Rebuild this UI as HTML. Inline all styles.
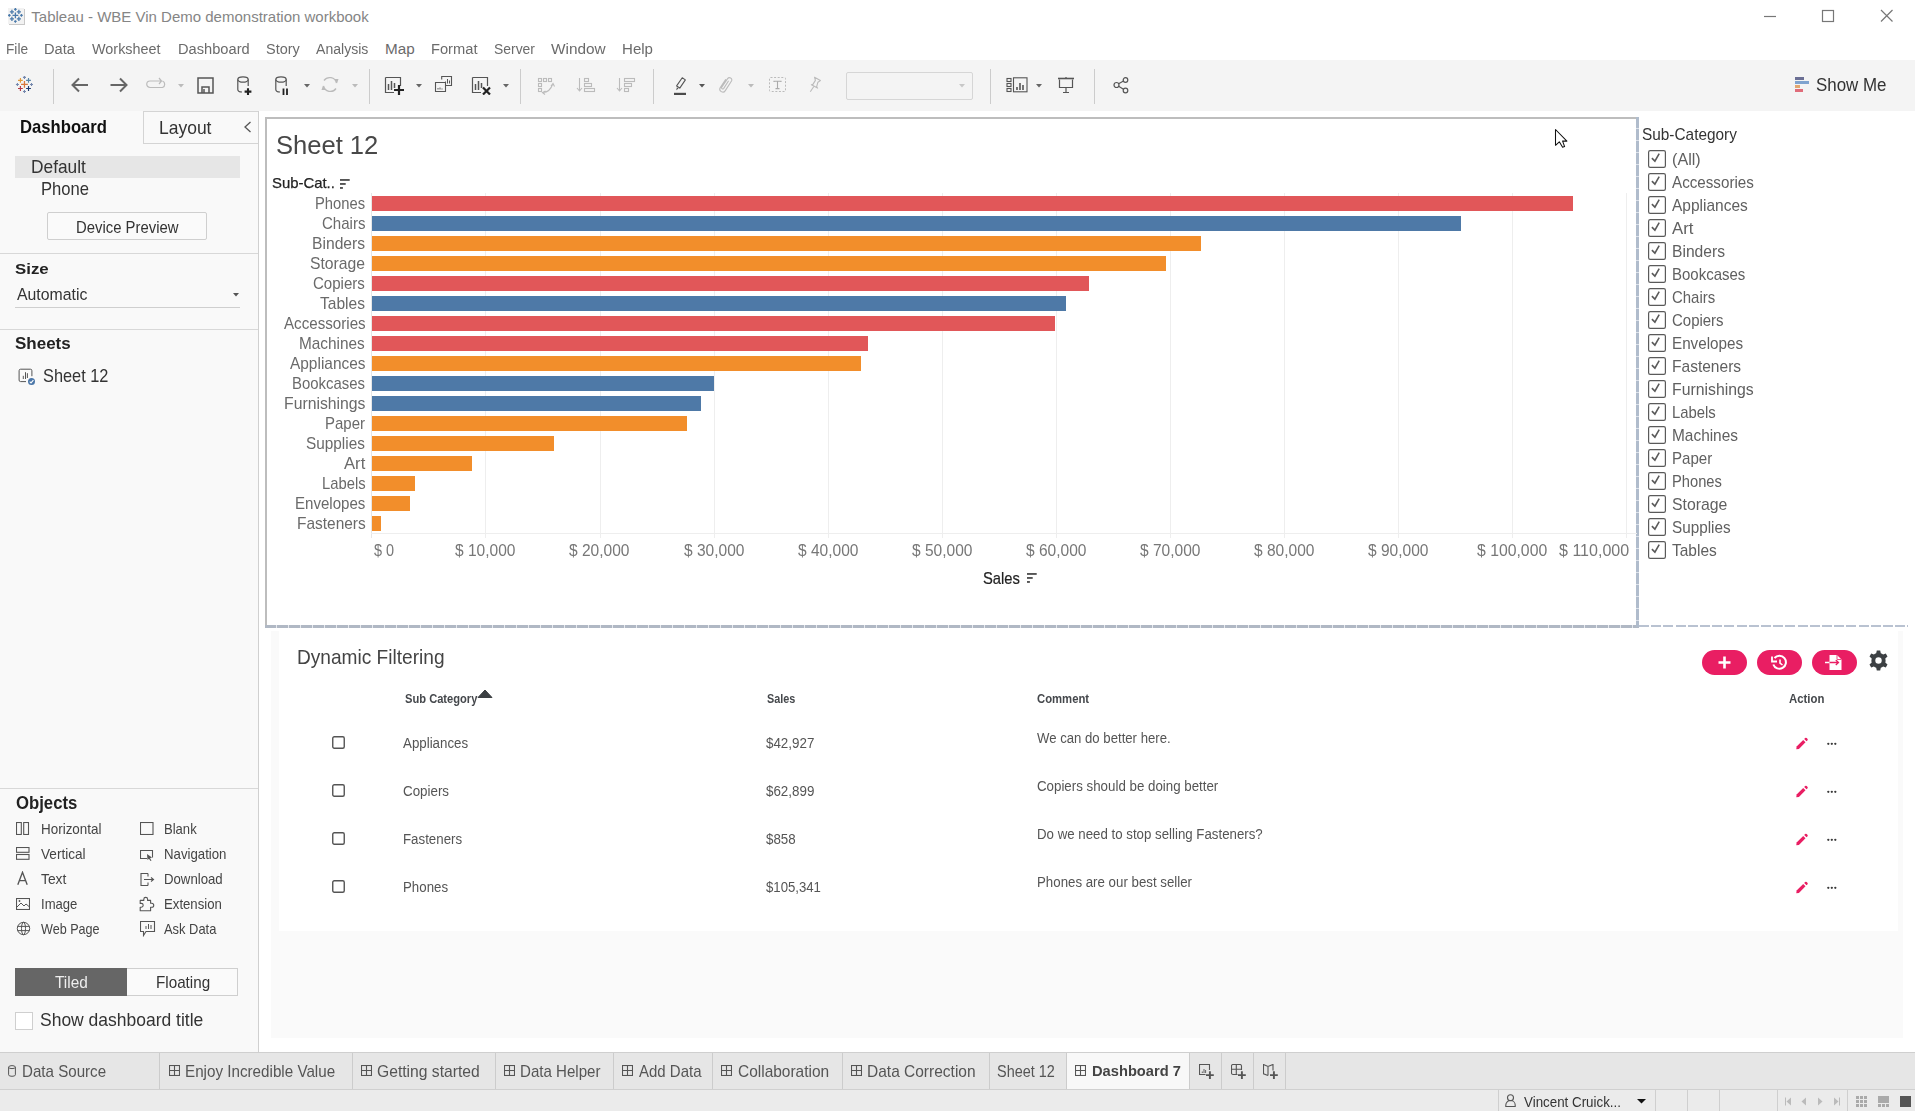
<!DOCTYPE html><html><head><meta charset="utf-8"><style>
html,body{margin:0;padding:0;width:1915px;height:1111px;overflow:hidden;background:#fff;font-family:"Liberation Sans",sans-serif;}
.t{position:absolute;white-space:nowrap;transform-origin:0 0;}
.r{position:absolute;display:block;}
</style></head><body>
<div class="r" style="left:0px;top:0px;width:1915px;height:60px;background:#ffffff;"></div>
<div class="r" style="left:0px;top:60px;width:1915px;height:51px;background:#f4f4f4;"></div>
<div class="r" style="left:0px;top:111px;width:258px;height:941px;background:#f9f9f9;"></div>
<div class="r" style="left:258px;top:111px;width:1px;height:941px;background:#d0d0d0;"></div>
<div class="r" style="left:259px;top:111px;width:1656px;height:941px;background:#ffffff;"></div>
<div class="t" style="left:31.30px;top:9.30px;font-size:15.00px;line-height:15.00px;color:#858585;">Tableau - WBE Vin Demo demonstration workbook</div>
<svg class="r" style="left:1760px;top:5px;" width="140" height="24" viewBox="0 0 140 24"><path d="M4 11.5H16" stroke="#777" stroke-width="1.2"/><rect x="62.5" y="5.5" width="11" height="11" fill="none" stroke="#777" stroke-width="1.2"/><path d="M121 5L132.5 16.5M132.5 5L121 16.5" stroke="#777" stroke-width="1.2"/></svg>
<div class="t" style="left:5.50px;top:40.88px;font-size:15.26px;line-height:15.26px;color:#6b6b6b;transform:scaleX(0.8989);">File</div>
<div class="t" style="left:44.10px;top:40.88px;font-size:15.26px;line-height:15.26px;color:#6b6b6b;transform:scaleX(0.9613);">Data</div>
<div class="t" style="left:92.00px;top:40.88px;font-size:15.26px;line-height:15.26px;color:#6b6b6b;transform:scaleX(0.9441);">Worksheet</div>
<div class="t" style="left:177.50px;top:40.88px;font-size:15.26px;line-height:15.26px;color:#6b6b6b;transform:scaleX(0.9604);">Dashboard</div>
<div class="t" style="left:266.00px;top:40.88px;font-size:15.26px;line-height:15.26px;color:#6b6b6b;transform:scaleX(0.9489);">Story</div>
<div class="t" style="left:316.40px;top:40.88px;font-size:15.26px;line-height:15.26px;color:#6b6b6b;transform:scaleX(0.9220);">Analysis</div>
<div class="t" style="left:385.00px;top:40.88px;font-size:15.26px;line-height:15.26px;color:#6b6b6b;">Map</div>
<div class="t" style="left:431.20px;top:40.88px;font-size:15.26px;line-height:15.26px;color:#6b6b6b;transform:scaleX(0.9621);">Format</div>
<div class="t" style="left:493.90px;top:40.88px;font-size:15.26px;line-height:15.26px;color:#6b6b6b;transform:scaleX(0.9122);">Server</div>
<div class="t" style="left:550.80px;top:40.88px;font-size:15.26px;line-height:15.26px;color:#6b6b6b;transform:scaleX(1.0089);">Window</div>
<div class="t" style="left:622.10px;top:40.88px;font-size:15.26px;line-height:15.26px;color:#6b6b6b;transform:scaleX(0.9875);">Help</div>
<div class="r" style="left:53px;top:69px;width:1px;height:35px;background:#cccccc;"></div>
<div class="r" style="left:369px;top:69px;width:1px;height:35px;background:#cccccc;"></div>
<div class="r" style="left:520px;top:69px;width:1px;height:35px;background:#cccccc;"></div>
<div class="r" style="left:653px;top:69px;width:1px;height:35px;background:#cccccc;"></div>
<div class="r" style="left:990px;top:69px;width:1px;height:35px;background:#cccccc;"></div>
<div class="r" style="left:1094px;top:69px;width:1px;height:35px;background:#cccccc;"></div>
<svg class="r" style="left:0px;top:60px;" width="50" height="50" viewBox="0 0 50 50"><path d="M21.06 24.46H27.86M24.46 21.06V27.86" stroke="#d9773a" stroke-width="1.25"/><path d="M18.01 20.41H22.81M20.41 18.01V22.81" stroke="#e29a3a" stroke-width="1.15"/><path d="M26.11 20.41H30.91M28.51 18.01V22.81" stroke="#5a86a6" stroke-width="1.15"/><path d="M18.01 28.51H22.81M20.41 26.11V30.91" stroke="#b53a45" stroke-width="1.15"/><path d="M26.11 28.51H30.91M28.51 26.11V30.91" stroke="#1f3b70" stroke-width="1.15"/><path d="M22.96 17.41H25.96M24.46 15.91V18.91" stroke="#7487ad" stroke-width="1.1"/><path d="M15.91 24.46H18.91M17.41 22.96V25.96" stroke="#7487ad" stroke-width="1.1"/><path d="M30.01 24.46H33.01M31.51 22.96V25.96" stroke="#7487ad" stroke-width="1.1"/><path d="M22.96 31.51H25.96M24.46 30.01V33.01" stroke="#7487ad" stroke-width="1.1"/></svg>
<div class="r" style="left:9px;top:9px;width:16px;height:16px;background:#c8c8c8;filter:blur(0.6px);"></div>
<div class="r" style="left:8px;top:8px;width:16px;height:16px;background:#f2f2f2;"></div>
<svg class="r" style="left:0px;top:0px;" width="32" height="32" viewBox="0 0 32 32"><path d="M12.48 15.40H18.32M15.40 12.48V18.32" stroke="#4a7aab" stroke-width="1.29"/><path d="M9.85 11.92H13.98M11.92 9.85V13.98" stroke="#4a7aab" stroke-width="1.29"/><path d="M16.82 11.92H20.95M18.88 9.85V13.98" stroke="#4a7aab" stroke-width="1.29"/><path d="M9.85 18.88H13.98M11.92 16.82V20.95" stroke="#4a7aab" stroke-width="1.29"/><path d="M16.82 18.88H20.95M18.88 16.82V20.95" stroke="#4a7aab" stroke-width="1.29"/><path d="M14.11 9.34H16.69M15.40 8.05V10.63" stroke="#4a7aab" stroke-width="1.204"/><path d="M8.05 15.40H10.63M9.34 14.11V16.69" stroke="#4a7aab" stroke-width="1.204"/><path d="M20.17 15.40H22.75M21.46 14.11V16.69" stroke="#4a7aab" stroke-width="1.204"/><path d="M14.11 21.46H16.69M15.40 20.17V22.75" stroke="#4a7aab" stroke-width="1.204"/></svg>
<svg class="r" style="left:71px;top:77px;" width="18" height="16" viewBox="0 0 18 16"><path d="M1.5 8H17M8 1.5L1.5 8L8 14.5" fill="none" stroke="#666" stroke-width="2"/></svg>
<svg class="r" style="left:110px;top:77px;" width="18" height="16" viewBox="0 0 18 16"><path d="M0.5 8H16M10 1.5L16.5 8L10 14.5" fill="none" stroke="#666" stroke-width="2"/></svg>
<svg class="r" style="left:146px;top:77px;" width="20" height="12" viewBox="0 0 20 12"><path d="M6 4H15M16.5 4A3.5 3.5 0 0 1 16.5 10.5H4A3.2 3.2 0 0 1 4 4H6M13 1L15.5 4L13 7" fill="none" stroke="#bbb" stroke-width="1.2"/></svg>
<svg class="r" style="left:178px;top:83.8px;" width="6" height="4" viewBox="0 0 6 4"><path d="M0 0H6L3 3.5Z" fill="#bbb"/></svg>
<svg class="r" style="left:197px;top:77px;" width="17" height="17" viewBox="0 0 17 17"><path d="M1 1H16V16H1Z M5 16V10H12V16M7 12V16" fill="none" stroke="#555" stroke-width="1.5"/></svg>
<svg class="r" style="left:237px;top:76px;" width="16" height="19" viewBox="0 0 16 19"><ellipse cx="6" cy="3.5" rx="5.2" ry="2.7" fill="none" stroke="#555" stroke-width="1.2"/><path d="M0.8 3.5V13.5Q0.8 16 5 16" fill="none" stroke="#555" stroke-width="1.2"/><path d="M11.2 3.5V10" fill="none" stroke="#555" stroke-width="1.2"/><path d="M11 12.3V19M7.6 15.6H14.4" stroke="#222" stroke-width="2.1"/></svg>
<svg class="r" style="left:275px;top:76px;" width="16" height="19" viewBox="0 0 16 19"><ellipse cx="6" cy="3.5" rx="5.2" ry="2.7" fill="none" stroke="#555" stroke-width="1.2"/><path d="M0.8 3.5V13.5Q0.8 16 5 16" fill="none" stroke="#555" stroke-width="1.2"/><path d="M11.2 3.5V10" fill="none" stroke="#555" stroke-width="1.2"/><path d="M8.5 12.5V19M12 12.5V19" stroke="#222" stroke-width="1.8"/></svg>
<svg class="r" style="left:304px;top:83.8px;" width="6" height="4" viewBox="0 0 6 4"><path d="M0 0H6L3 3.5Z" fill="#666"/></svg>
<svg class="r" style="left:321px;top:76px;" width="18" height="17" viewBox="0 0 18 17"><path d="M15.5 7A7 7 0 0 0 3 4.5M2.5 10A7 7 0 0 0 15 12.5" fill="none" stroke="#bbb" stroke-width="1.3"/><path d="M13.5 3L16 7.5L17.5 3Z M4.5 14L2 9.5L0.5 14Z" fill="#bbb"/></svg>
<svg class="r" style="left:352px;top:83.8px;" width="6" height="4" viewBox="0 0 6 4"><path d="M0 0H6L3 3.5Z" fill="#bbb"/></svg>
<svg class="r" style="left:384px;top:76px;" width="21" height="19" viewBox="0 0 21 19"><path d="M1.5 1.5H16.5V10M10 16.5H1.5V1.5" fill="none" stroke="#555" stroke-width="1.2"/><path d="M4.5 8V14M7.5 5V14M10.5 7V12" stroke="#555" stroke-width="1.5"/><path d="M15 9V19M10 14H20" stroke="#222" stroke-width="2.2"/></svg>
<svg class="r" style="left:416px;top:83.8px;" width="6" height="4" viewBox="0 0 6 4"><path d="M0 0H6L3 3.5Z" fill="#666"/></svg>
<svg class="r" style="left:434px;top:75px;" width="19" height="18" viewBox="0 0 19 18"><path d="M7.7 4.5V1.5H17.5V10.5H12" fill="none" stroke="#555" stroke-width="1.1"/><path d="M11.5 8.5V6.5M13.5 8.5V4M15.5 8.5V5.5" stroke="#555" stroke-width="1"/><path d="M1.5 7.5H11.5V16.5H1.5Z" fill="#f4f4f4" stroke="#555" stroke-width="1.1"/><path d="M4 14.5V13M6 14.5V12.5M8 14.5V13.5" stroke="#555" stroke-width="1"/></svg>
<svg class="r" style="left:471px;top:76px;" width="21" height="19" viewBox="0 0 21 19"><path d="M1.5 1.5H16.5V10M10 16.5H1.5V1.5" fill="none" stroke="#555" stroke-width="1.2"/><path d="M4.5 8V14M7.5 5V14M10.5 7V12" stroke="#555" stroke-width="1.5"/><path d="M12 11.5L19 18.5M19 11.5L12 18.5" stroke="#222" stroke-width="2.2"/></svg>
<svg class="r" style="left:503px;top:83.8px;" width="6" height="4" viewBox="0 0 6 4"><path d="M0 0H6L3 3.5Z" fill="#666"/></svg>
<svg class="r" style="left:537px;top:77px;" width="19" height="18" viewBox="0 0 19 18"><g fill="none" stroke="#bbb" stroke-width="1.1"><rect x="1.5" y="1.5" width="3" height="3"/><rect x="6.5" y="1.5" width="3" height="3"/><rect x="11.5" y="1.5" width="3" height="3"/><rect x="1.5" y="6.5" width="3" height="3"/><rect x="1.5" y="11.5" width="3" height="3"/><path d="M6 15.5Q13 15 15.5 7.5M14 9L16 6.5L17.5 9.5M8 17.5L5.5 15.5L8.5 14"/></g></svg>
<svg class="r" style="left:576px;top:77px;" width="20" height="16" viewBox="0 0 20 16"><g fill="none" stroke="#bbb" stroke-width="1.1"><path d="M3.5 1V13M1 11L3.5 14L6 11"/><rect x="8.5" y="1.5" width="4" height="3"/><rect x="8.5" y="6.5" width="7" height="3"/><rect x="8.5" y="11.5" width="10" height="3"/></g></svg>
<svg class="r" style="left:616px;top:77px;" width="20" height="16" viewBox="0 0 20 16"><g fill="none" stroke="#bbb" stroke-width="1.1"><path d="M3.5 1V13M1 11L3.5 14L6 11"/><rect x="8.5" y="1.5" width="10" height="3"/><rect x="8.5" y="6.5" width="7" height="3"/><rect x="8.5" y="11.5" width="4" height="3"/></g></svg>
<svg class="r" style="left:673px;top:76px;" width="15" height="20" viewBox="0 0 15 20"><path d="M3.63 9.93L9.23 1.73L12.37 3.87L6.77 12.07Z" fill="none" stroke="#555" stroke-width="1.1" stroke-linejoin="round"/><path d="M3.9 11.2L5.6 12.4L3.2 14.3Z" fill="#555"/><rect x="1" y="16.8" width="12" height="2.2" fill="#4a4a4a"/></svg>
<svg class="r" style="left:699px;top:83.8px;" width="6" height="4" viewBox="0 0 6 4"><path d="M0 0H6L3 3.5Z" fill="#555"/></svg>
<svg class="r" style="left:719px;top:76px;" width="14" height="17" viewBox="0 0 14 17"><path d="M9.3 5.2L4.6 12.6A1.2 1.2 0 0 1 2.6 11.4L8.6 2.6A2.3 2.3 0 0 1 12.5 5L6.3 14.6A2.9 2.9 0 0 1 1.3 11.6L6.6 3.6" fill="none" stroke="#bbb" stroke-width="1.1" stroke-linecap="round"/></svg>
<svg class="r" style="left:748px;top:83.8px;" width="6" height="4" viewBox="0 0 6 4"><path d="M0 0H6L3 3.5Z" fill="#bbb"/></svg>
<svg class="r" style="left:769px;top:77px;" width="18" height="16" viewBox="0 0 18 16"><rect x="0.5" y="0.5" width="16" height="14" rx="1" fill="none" stroke="#bbb" stroke-width="1" stroke-dasharray="2 1.6"/><path d="M5 5.1V4.3H12V5.1M8.5 4.3V11.5M6.5 11.6H10.5" fill="none" stroke="#aaa" stroke-width="1.1"/></svg>
<svg class="r" style="left:807px;top:76px;" width="15" height="17" viewBox="0 0 15 17"><path d="M7.5 1.2L13.4 4.6L10.9 6.2L9.6 10.8L10.6 12.1L4.4 8.7L5.9 8.4L8.4 4.4Z" fill="none" stroke="#bbb" stroke-width="1.1" stroke-linejoin="round"/><path d="M6.8 10.5L3.3 15.8" stroke="#bbb" stroke-width="1.1"/></svg>
<div class="r" style="left:846px;top:72px;width:127px;height:28px;background:transparent;border:1px solid #d6d6d6;box-sizing:border-box;border-radius:2px;"></div>
<svg class="r" style="left:958.5px;top:84px;" width="6" height="4" viewBox="0 0 6 4"><path d="M0 0H6L3 3.5Z" fill="#c8c8c8"/></svg>
<svg class="r" style="left:1006px;top:77px;" width="22" height="16" viewBox="0 0 22 16"><g fill="none" stroke="#555" stroke-width="1.1"><rect x="1" y="1.5" width="4" height="3"/><rect x="1" y="6.5" width="4" height="3"/><rect x="1" y="11.5" width="4" height="3"/><rect x="7.5" y="0.8" width="13.5" height="14"/></g><path d="M11 13V10M14 13V6M17 13V8" stroke="#555" stroke-width="1.6"/></svg>
<svg class="r" style="left:1036px;top:83.8px;" width="6" height="4" viewBox="0 0 6 4"><path d="M0 0H6L3 3.5Z" fill="#666"/></svg>
<svg class="r" style="left:1057px;top:77px;" width="18" height="17" viewBox="0 0 18 17"><path d="M1 1.5H17" stroke="#555" stroke-width="1.6"/><path d="M2.5 2.5V10.5H15.5V2.5M9 10.5V15.5M6 15.5H12M9 0V1" fill="none" stroke="#555" stroke-width="1.2"/></svg>
<svg class="r" style="left:1113px;top:77px;" width="16" height="17" viewBox="0 0 16 17"><g fill="none" stroke="#555" stroke-width="1.2"><circle cx="3.5" cy="8" r="2.5"/><circle cx="12.5" cy="3" r="2.3"/><circle cx="12.5" cy="13.5" r="2.3"/><path d="M5.6 6.8L10.5 4M5.6 9.2L10.5 12.2"/></g></svg>
<svg class="r" style="left:1795px;top:76px;" width="15" height="16" viewBox="0 0 15 16"><rect x="0" y="1" width="9" height="3" fill="#6b6f94"/><rect x="0" y="5" width="14" height="3" fill="#7fa3cf"/><rect x="0" y="9" width="5" height="3" fill="#e2a76f"/><rect x="0" y="13" width="8" height="3" fill="#e06c7a"/></svg>
<div class="t" style="left:1816.40px;top:76.01px;font-size:18.90px;line-height:18.90px;color:#333;transform:scaleX(0.8952);">Show Me</div>
<div class="t" style="left:19.70px;top:118.79px;font-size:17.73px;line-height:17.73px;color:#111;font-weight:bold;transform:scaleX(0.9404);">Dashboard</div>
<div class="r" style="left:143px;top:111px;width:115px;height:1px;background:#d4d4d4;"></div>
<div class="r" style="left:143px;top:111px;width:1px;height:33px;background:#d4d4d4;"></div>
<div class="r" style="left:143px;top:143px;width:115px;height:1px;background:#d4d4d4;"></div>
<div class="t" style="left:159.30px;top:118.90px;font-size:18.31px;line-height:18.31px;color:#333;transform:scaleX(0.9549);">Layout</div>
<svg class="r" style="left:243px;top:121px;" width="9" height="12" viewBox="0 0 9 12"><path d="M7.5 1L2 6L7.5 11" fill="none" stroke="#555" stroke-width="1.3"/></svg>
<div class="r" style="left:15px;top:156px;width:225px;height:22px;background:#e6e6e6;"></div>
<div class="t" style="left:31.10px;top:157.50px;font-size:18.31px;line-height:18.31px;color:#333;transform:scaleX(0.9462);">Default</div>
<div class="t" style="left:41.20px;top:180.89px;font-size:17.73px;line-height:17.73px;color:#333;transform:scaleX(0.9379);">Phone</div>
<div class="r" style="left:47px;top:212px;width:160px;height:28px;background:#fafafa;border:1px solid #cfcfcf;box-sizing:border-box;border-radius:2px;"></div>
<div class="t" style="left:75.70px;top:218.94px;font-size:16.13px;line-height:16.13px;color:#333;transform:scaleX(0.9233);">Device Preview</div>
<div class="r" style="left:0px;top:253px;width:258px;height:1px;background:#d8d8d8;"></div>
<div class="t" style="left:15.40px;top:261.26px;font-size:15.41px;line-height:15.41px;color:#222;font-weight:bold;transform:scaleX(1.0931);">Size</div>
<div class="t" style="left:16.50px;top:286.34px;font-size:16.13px;line-height:16.13px;color:#333;transform:scaleX(0.9828);">Automatic</div>
<svg class="r" style="left:233px;top:293px;" width="6" height="4" viewBox="0 0 6 4"><path d="M0 0H6L3 3.5Z" fill="#555"/></svg>
<div class="r" style="left:15px;top:307px;width:225px;height:1px;background:#cfcfcf;"></div>
<div class="r" style="left:0px;top:329px;width:258px;height:1px;background:#d8d8d8;"></div>
<div class="t" style="left:15.40px;top:336.17px;font-size:16.57px;line-height:16.57px;color:#222;font-weight:bold;transform:scaleX(1.0252);">Sheets</div>
<svg class="r" style="left:18px;top:368px;" width="18" height="18" viewBox="0 0 18 18"><path d="M8 13.6H2.6A1.5 1.5 0 0 1 1.1 12.1V2.7A1.5 1.5 0 0 1 2.6 1.2H12.4A1.5 1.5 0 0 1 13.9 2.7V8.2" fill="none" stroke="#555" stroke-width="1"/><path d="M5.3 11V7.8M7.5 11V4.2M9.4 10V5.2" stroke="#555" stroke-width="1"/><circle cx="13.5" cy="13.5" r="3.5" fill="#4a76a8"/><path d="M11.7 13.7L13 14.9L15.4 12.1" fill="none" stroke="#fff" stroke-width="1.1"/></svg>
<div class="t" style="left:43.30px;top:367.79px;font-size:17.73px;line-height:17.73px;color:#333;transform:scaleX(0.9228);">Sheet 12</div>
<div class="r" style="left:0px;top:788px;width:258px;height:1px;background:#d8d8d8;"></div>
<div class="t" style="left:15.60px;top:795.44px;font-size:17.44px;line-height:17.44px;color:#222;font-weight:bold;transform:scaleX(0.9582);">Objects</div>
<div class="t" style="left:40.60px;top:821.87px;font-size:14.10px;line-height:14.10px;color:#444;transform:scaleX(0.9532);">Horizontal</div>
<div class="t" style="left:164.40px;top:821.87px;font-size:14.10px;line-height:14.10px;color:#444;transform:scaleX(0.9266);">Blank</div>
<div class="t" style="left:40.60px;top:846.87px;font-size:14.10px;line-height:14.10px;color:#444;transform:scaleX(0.9647);">Vertical</div>
<div class="t" style="left:164.40px;top:846.87px;font-size:14.10px;line-height:14.10px;color:#444;transform:scaleX(0.9382);">Navigation</div>
<div class="t" style="left:40.60px;top:871.87px;font-size:14.10px;line-height:14.10px;color:#444;transform:scaleX(0.9823);">Text</div>
<div class="t" style="left:164.40px;top:871.87px;font-size:14.10px;line-height:14.10px;color:#444;transform:scaleX(0.9362);">Download</div>
<div class="t" style="left:40.60px;top:896.87px;font-size:14.10px;line-height:14.10px;color:#444;transform:scaleX(0.9290);">Image</div>
<div class="t" style="left:164.40px;top:896.87px;font-size:14.10px;line-height:14.10px;color:#444;transform:scaleX(0.9350);">Extension</div>
<div class="t" style="left:40.60px;top:921.87px;font-size:14.10px;line-height:14.10px;color:#444;transform:scaleX(0.8937);">Web Page</div>
<div class="t" style="left:164.40px;top:921.87px;font-size:14.10px;line-height:14.10px;color:#444;transform:scaleX(0.9159);">Ask Data</div>
<svg class="r" style="left:16px;top:822px;" width="14" height="13" viewBox="0 0 14 13"><g fill="none" stroke="#555" stroke-width="1.1"><rect x="0.5" y="0.5" width="4.8" height="12"/><rect x="7.7" y="0.5" width="4.8" height="12"/></g></svg>
<svg class="r" style="left:140px;top:822px;" width="14" height="13" viewBox="0 0 14 13"><rect x="0.5" y="0.5" width="12.5" height="12" fill="none" stroke="#555" stroke-width="1.1"/></svg>
<svg class="r" style="left:16px;top:847px;" width="14" height="13" viewBox="0 0 14 13"><g fill="none" stroke="#555" stroke-width="1.1"><rect x="0.5" y="0.5" width="12.5" height="4.8"/><rect x="0.5" y="7.5" width="12.5" height="4.8"/></g></svg>
<svg class="r" style="left:140px;top:850px;" width="14" height="11" viewBox="0 0 14 11"><path d="M7 8.5H0.5V0.5H12.5V7.5" fill="none" stroke="#555" stroke-width="1.1"/><path d="M7 4L12 7.5L10 8.3L11.5 10.5L10.5 11L9 8.8L7.5 10Z" fill="#555"/></svg>
<svg class="r" style="left:16px;top:871px;" width="13" height="15" viewBox="0 0 13 15"><path d="M1.8 13.8L6.5 1.3L11.2 13.8M3.5 9.6H9.5" fill="none" stroke="#555" stroke-width="1.35"/></svg>
<svg class="r" style="left:140px;top:873px;" width="15" height="14" viewBox="0 0 15 14"><path d="M8 0.5H1V12.5H8M8 0.5V3.5M8 9.5V12.5M4 6.5H13M11 4.5L13.5 6.5L11 8.5" fill="none" stroke="#555" stroke-width="1.1"/></svg>
<svg class="r" style="left:16px;top:898px;" width="14" height="12" viewBox="0 0 14 12"><rect x="0.5" y="0.5" width="13" height="11" fill="none" stroke="#555" stroke-width="1.1"/><path d="M1 9L5 5L8 8L10 6L13 8.5" fill="none" stroke="#555" stroke-width="1"/><circle cx="3.5" cy="3" r="0.9" fill="#555"/></svg>
<svg class="r" style="left:139px;top:895px;" width="17" height="17" viewBox="0 0 17 17"><path d="M1.2 5.4H4.8V4.3A1.9 1.9 0 1 1 8.6 4.3V5.4H11.6V8.2H12.7A2 2 0 1 1 12.7 12.3H11.6V15.8H1.2V12.2H2.3A1.9 1.9 0 1 0 2.3 8.4H1.2Z" fill="none" stroke="#555" stroke-width="1.1" stroke-linejoin="round"/></svg>
<svg class="r" style="left:16px;top:921px;" width="15" height="15" viewBox="0 0 15 15"><g fill="none" stroke="#555" stroke-width="1"><circle cx="7.5" cy="7.5" r="6.2"/><ellipse cx="7.5" cy="7.5" rx="2" ry="6.2"/><path d="M1.5 5.4H13.5M1.5 9.6H13.5"/></g></svg>
<svg class="r" style="left:140px;top:921px;" width="16" height="16" viewBox="0 0 16 16"><path d="M0.5 0.5H14.5V10.5H6L3.5 14.5V10.5H0.5Z" fill="none" stroke="#555" stroke-width="1.1"/><path d="M6 8V5M8.5 8V3M11 8V4" stroke="#555" stroke-width="1"/></svg>
<div class="r" style="left:15px;top:968px;width:112px;height:28px;background:#666666;"></div>
<div class="r" style="left:127px;top:968px;width:111px;height:28px;background:#fafafa;border:1px solid #cfcfcf;border-left:none;box-sizing:border-box;"></div>
<div class="t" style="left:54.70px;top:975.27px;font-size:16.57px;line-height:16.57px;color:#eeeeee;transform:scaleX(0.9293);">Tiled</div>
<div class="t" style="left:155.80px;top:975.27px;font-size:16.57px;line-height:16.57px;color:#333;transform:scaleX(0.9193);">Floating</div>
<div class="r" style="left:15px;top:1012px;width:18px;height:18px;background:#ffffff;border:1px solid #cfcfcf;box-sizing:border-box;"></div>
<div class="t" style="left:39.60px;top:1011.81px;font-size:17.59px;line-height:17.59px;color:#333;transform:scaleX(0.9948);">Show dashboard title</div>
<div class="r" style="left:265px;top:117px;width:1373px;height:2px;background:#bdbdbd;"></div>
<div class="r" style="left:265px;top:117px;width:2px;height:511px;background:#bdbdbd;"></div>
<div class="r" style="left:265px;top:625px;width:1374px;height:2.6px;background:repeating-linear-gradient(90deg,#b0b8c4 0 11px,#e6e9ee 11px 12px);"></div>
<div class="r" style="left:1636px;top:117px;width:2.8px;height:510px;background:repeating-linear-gradient(180deg,#b0bccc 0 11px,#dde2ea 11px 12px);"></div>
<div class="r" style="left:1639px;top:625px;width:269px;height:2px;background:repeating-linear-gradient(90deg,#b9c2d1 0 10px,transparent 10px 12.2px);"></div>
<div class="t" style="left:275.70px;top:132.08px;font-size:26.60px;line-height:26.60px;color:#484848;transform:scaleX(0.9608);">Sheet 12</div>
<div class="t" style="left:272.30px;top:175.36px;font-size:15.41px;line-height:15.41px;color:#222;transform:scaleX(0.9665);-webkit-text-stroke:0.25px #222;">Sub-Cat..</div>
<svg class="r" style="left:340.1px;top:179px;" width="10" height="10" viewBox="0 0 10 10"><rect x="0" y="0" width="9.7" height="1.9" fill="#555"/><rect x="0" y="4" width="5.7" height="1.9" fill="#555"/><rect x="0" y="8" width="2.9" height="1.9" fill="#555"/></svg>
<div class="r" style="left:485px;top:193px;width:1px;height:345px;background:#eeeeee;"></div>
<div class="r" style="left:600px;top:193px;width:1px;height:345px;background:#eeeeee;"></div>
<div class="r" style="left:714px;top:193px;width:1px;height:345px;background:#eeeeee;"></div>
<div class="r" style="left:828px;top:193px;width:1px;height:345px;background:#eeeeee;"></div>
<div class="r" style="left:942px;top:193px;width:1px;height:345px;background:#eeeeee;"></div>
<div class="r" style="left:1056px;top:193px;width:1px;height:345px;background:#eeeeee;"></div>
<div class="r" style="left:1170px;top:193px;width:1px;height:345px;background:#eeeeee;"></div>
<div class="r" style="left:1284px;top:193px;width:1px;height:345px;background:#eeeeee;"></div>
<div class="r" style="left:1398px;top:193px;width:1px;height:345px;background:#eeeeee;"></div>
<div class="r" style="left:1512px;top:193px;width:1px;height:345px;background:#eeeeee;"></div>
<div class="r" style="left:1626px;top:193px;width:1px;height:345px;background:#eeeeee;"></div>
<div class="r" style="left:371px;top:193px;width:1px;height:345px;background:#e6e6e6;"></div>
<div class="r" style="left:371px;top:533px;width:1266px;height:1px;background:#eeeeee;"></div>
<div class="r" style="left:372px;top:196.1px;width:1201px;height:14.6px;background:#e15759;"></div>
<div class="t" style="left:315.10px;top:196.47px;font-size:15.99px;line-height:15.99px;color:#6a6a6a;transform:scaleX(0.9238);">Phones</div>
<div class="r" style="left:372px;top:216.1px;width:1089px;height:14.6px;background:#4e79a7;"></div>
<div class="t" style="left:321.70px;top:216.47px;font-size:15.99px;line-height:15.99px;color:#6a6a6a;transform:scaleX(0.9414);">Chairs</div>
<div class="r" style="left:372px;top:236.1px;width:829px;height:14.6px;background:#f28e2b;"></div>
<div class="t" style="left:312.10px;top:236.47px;font-size:15.99px;line-height:15.99px;color:#6a6a6a;transform:scaleX(0.9794);">Binders</div>
<div class="r" style="left:372px;top:256.1px;width:794px;height:14.6px;background:#f28e2b;"></div>
<div class="t" style="left:310.10px;top:256.47px;font-size:15.99px;line-height:15.99px;color:#6a6a6a;transform:scaleX(0.9841);">Storage</div>
<div class="r" style="left:372px;top:276.1px;width:717px;height:14.6px;background:#e15759;"></div>
<div class="t" style="left:313.30px;top:276.47px;font-size:15.99px;line-height:15.99px;color:#6a6a6a;transform:scaleX(0.9420);">Copiers</div>
<div class="r" style="left:372px;top:296.1px;width:694px;height:14.6px;background:#4e79a7;"></div>
<div class="t" style="left:320.20px;top:296.47px;font-size:15.99px;line-height:15.99px;color:#6a6a6a;transform:scaleX(0.9736);">Tables</div>
<div class="r" style="left:372px;top:316.1px;width:683px;height:14.6px;background:#e15759;"></div>
<div class="t" style="left:283.50px;top:316.47px;font-size:15.99px;line-height:15.99px;color:#6a6a6a;transform:scaleX(0.9479);">Accessories</div>
<div class="r" style="left:372px;top:336.1px;width:496px;height:14.6px;background:#e15759;"></div>
<div class="t" style="left:299.40px;top:336.47px;font-size:15.99px;line-height:15.99px;color:#6a6a6a;transform:scaleX(0.9616);">Machines</div>
<div class="r" style="left:372px;top:356.1px;width:489px;height:14.6px;background:#f28e2b;"></div>
<div class="t" style="left:289.70px;top:356.47px;font-size:15.99px;line-height:15.99px;color:#6a6a6a;transform:scaleX(0.9653);">Appliances</div>
<div class="r" style="left:372px;top:376.1px;width:342px;height:14.6px;background:#4e79a7;"></div>
<div class="t" style="left:292.20px;top:376.47px;font-size:15.99px;line-height:15.99px;color:#6a6a6a;transform:scaleX(0.9333);">Bookcases</div>
<div class="r" style="left:372px;top:396.1px;width:329px;height:14.6px;background:#4e79a7;"></div>
<div class="t" style="left:283.70px;top:396.47px;font-size:15.99px;line-height:15.99px;color:#6a6a6a;transform:scaleX(0.9862);">Furnishings</div>
<div class="r" style="left:372px;top:416.1px;width:315px;height:14.6px;background:#f28e2b;"></div>
<div class="t" style="left:325.20px;top:416.47px;font-size:15.99px;line-height:15.99px;color:#6a6a6a;transform:scaleX(0.9377);">Paper</div>
<div class="r" style="left:372px;top:436.1px;width:182px;height:14.6px;background:#f28e2b;"></div>
<div class="t" style="left:306.30px;top:436.47px;font-size:15.99px;line-height:15.99px;color:#6a6a6a;transform:scaleX(0.9604);">Supplies</div>
<div class="r" style="left:372px;top:456.1px;width:100px;height:14.6px;background:#f28e2b;"></div>
<div class="t" style="left:343.90px;top:456.47px;font-size:15.99px;line-height:15.99px;color:#6a6a6a;transform:scaleX(1.0424);">Art</div>
<div class="r" style="left:372px;top:476.1px;width:43px;height:14.6px;background:#f28e2b;"></div>
<div class="t" style="left:321.60px;top:476.47px;font-size:15.99px;line-height:15.99px;color:#6a6a6a;transform:scaleX(0.9253);">Labels</div>
<div class="r" style="left:372px;top:496.1px;width:38px;height:14.6px;background:#f28e2b;"></div>
<div class="t" style="left:294.80px;top:496.47px;font-size:15.99px;line-height:15.99px;color:#6a6a6a;transform:scaleX(0.9429);">Envelopes</div>
<div class="r" style="left:372px;top:516.1px;width:9px;height:14.6px;background:#f28e2b;"></div>
<div class="t" style="left:296.50px;top:516.47px;font-size:15.99px;line-height:15.99px;color:#6a6a6a;transform:scaleX(0.9665);">Fasteners</div>
<div class="t" style="left:373.90px;top:543.07px;font-size:15.99px;line-height:15.99px;color:#777;transform:scaleX(0.9044);">$ 0</div>
<div class="t" style="left:455.35px;top:543.07px;font-size:15.99px;line-height:15.99px;color:#777;transform:scaleX(0.9720);">$ 10,000</div>
<div class="t" style="left:569.45px;top:543.07px;font-size:15.99px;line-height:15.99px;color:#777;transform:scaleX(0.9720);">$ 20,000</div>
<div class="t" style="left:683.55px;top:543.07px;font-size:15.99px;line-height:15.99px;color:#777;transform:scaleX(0.9720);">$ 30,000</div>
<div class="t" style="left:797.65px;top:543.07px;font-size:15.99px;line-height:15.99px;color:#777;transform:scaleX(0.9720);">$ 40,000</div>
<div class="t" style="left:911.75px;top:543.07px;font-size:15.99px;line-height:15.99px;color:#777;transform:scaleX(0.9720);">$ 50,000</div>
<div class="t" style="left:1025.85px;top:543.07px;font-size:15.99px;line-height:15.99px;color:#777;transform:scaleX(0.9720);">$ 60,000</div>
<div class="t" style="left:1139.95px;top:543.07px;font-size:15.99px;line-height:15.99px;color:#777;transform:scaleX(0.9720);">$ 70,000</div>
<div class="t" style="left:1254.05px;top:543.07px;font-size:15.99px;line-height:15.99px;color:#777;transform:scaleX(0.9720);">$ 80,000</div>
<div class="t" style="left:1368.15px;top:543.07px;font-size:15.99px;line-height:15.99px;color:#777;transform:scaleX(0.9720);">$ 90,000</div>
<div class="t" style="left:1477.40px;top:543.07px;font-size:15.99px;line-height:15.99px;color:#777;transform:scaleX(0.9869);">$ 100,000</div>
<div class="t" style="left:1559.20px;top:543.07px;font-size:15.99px;line-height:15.99px;color:#777;transform:scaleX(1.0036);">$ 110,000</div>
<div class="t" style="left:983.30px;top:571.01px;font-size:15.70px;line-height:15.70px;color:#222;transform:scaleX(0.9399);-webkit-text-stroke:0.2px #222;">Sales</div>
<svg class="r" style="left:1027px;top:573px;" width="10" height="10" viewBox="0 0 10 10"><rect x="0" y="0" width="9.7" height="1.9" fill="#555"/><rect x="0" y="4" width="5.7" height="1.9" fill="#555"/><rect x="0" y="8" width="2.9" height="1.9" fill="#555"/></svg>
<div class="t" style="left:1641.50px;top:126.67px;font-size:15.99px;line-height:15.99px;color:#333;transform:scaleX(0.9620);">Sub-Category</div>
<svg class="r" style="left:1648px;top:150.1px;" width="18" height="18" viewBox="0 0 18 18"><rect x="0.6" y="0.6" width="16.8" height="16.8" rx="1.6" fill="#fff" stroke="#5a5a5a" stroke-width="1.2"/><path d="M3.9 8.1L6.9 11.1L11.2 3.7" fill="none" stroke="#5a5a5a" stroke-width="1.6"/></svg>
<div class="t" style="left:1671.70px;top:152.47px;font-size:15.99px;line-height:15.99px;color:#606060;transform:scaleX(1.0102);">(All)</div>
<svg class="r" style="left:1648px;top:173.1px;" width="18" height="18" viewBox="0 0 18 18"><rect x="0.6" y="0.6" width="16.8" height="16.8" rx="1.6" fill="#fff" stroke="#5a5a5a" stroke-width="1.2"/><path d="M3.9 8.1L6.9 11.1L11.2 3.7" fill="none" stroke="#5a5a5a" stroke-width="1.6"/></svg>
<div class="t" style="left:1671.70px;top:175.47px;font-size:15.99px;line-height:15.99px;color:#606060;transform:scaleX(0.9502);">Accessories</div>
<svg class="r" style="left:1648px;top:196.1px;" width="18" height="18" viewBox="0 0 18 18"><rect x="0.6" y="0.6" width="16.8" height="16.8" rx="1.6" fill="#fff" stroke="#5a5a5a" stroke-width="1.2"/><path d="M3.9 8.1L6.9 11.1L11.2 3.7" fill="none" stroke="#5a5a5a" stroke-width="1.6"/></svg>
<div class="t" style="left:1671.70px;top:198.47px;font-size:15.99px;line-height:15.99px;color:#606060;transform:scaleX(0.9691);">Appliances</div>
<svg class="r" style="left:1648px;top:219.1px;" width="18" height="18" viewBox="0 0 18 18"><rect x="0.6" y="0.6" width="16.8" height="16.8" rx="1.6" fill="#fff" stroke="#5a5a5a" stroke-width="1.2"/><path d="M3.9 8.1L6.9 11.1L11.2 3.7" fill="none" stroke="#5a5a5a" stroke-width="1.6"/></svg>
<div class="t" style="left:1671.70px;top:221.47px;font-size:15.99px;line-height:15.99px;color:#606060;transform:scaleX(1.0473);">Art</div>
<svg class="r" style="left:1648px;top:242.1px;" width="18" height="18" viewBox="0 0 18 18"><rect x="0.6" y="0.6" width="16.8" height="16.8" rx="1.6" fill="#fff" stroke="#5a5a5a" stroke-width="1.2"/><path d="M3.9 8.1L6.9 11.1L11.2 3.7" fill="none" stroke="#5a5a5a" stroke-width="1.6"/></svg>
<div class="t" style="left:1671.70px;top:244.47px;font-size:15.99px;line-height:15.99px;color:#606060;transform:scaleX(0.9776);">Binders</div>
<svg class="r" style="left:1648px;top:265.1px;" width="18" height="18" viewBox="0 0 18 18"><rect x="0.6" y="0.6" width="16.8" height="16.8" rx="1.6" fill="#fff" stroke="#5a5a5a" stroke-width="1.2"/><path d="M3.9 8.1L6.9 11.1L11.2 3.7" fill="none" stroke="#5a5a5a" stroke-width="1.6"/></svg>
<div class="t" style="left:1671.70px;top:267.47px;font-size:15.99px;line-height:15.99px;color:#606060;transform:scaleX(0.9372);">Bookcases</div>
<svg class="r" style="left:1648px;top:288.1px;" width="18" height="18" viewBox="0 0 18 18"><rect x="0.6" y="0.6" width="16.8" height="16.8" rx="1.6" fill="#fff" stroke="#5a5a5a" stroke-width="1.2"/><path d="M3.9 8.1L6.9 11.1L11.2 3.7" fill="none" stroke="#5a5a5a" stroke-width="1.6"/></svg>
<div class="t" style="left:1671.70px;top:290.47px;font-size:15.99px;line-height:15.99px;color:#606060;transform:scaleX(0.9349);">Chairs</div>
<svg class="r" style="left:1648px;top:311.1px;" width="18" height="18" viewBox="0 0 18 18"><rect x="0.6" y="0.6" width="16.8" height="16.8" rx="1.6" fill="#fff" stroke="#5a5a5a" stroke-width="1.2"/><path d="M3.9 8.1L6.9 11.1L11.2 3.7" fill="none" stroke="#5a5a5a" stroke-width="1.6"/></svg>
<div class="t" style="left:1671.70px;top:313.47px;font-size:15.99px;line-height:15.99px;color:#606060;transform:scaleX(0.9365);">Copiers</div>
<svg class="r" style="left:1648px;top:334.1px;" width="18" height="18" viewBox="0 0 18 18"><rect x="0.6" y="0.6" width="16.8" height="16.8" rx="1.6" fill="#fff" stroke="#5a5a5a" stroke-width="1.2"/><path d="M3.9 8.1L6.9 11.1L11.2 3.7" fill="none" stroke="#5a5a5a" stroke-width="1.6"/></svg>
<div class="t" style="left:1671.70px;top:336.47px;font-size:15.99px;line-height:15.99px;color:#606060;transform:scaleX(0.9522);">Envelopes</div>
<svg class="r" style="left:1648px;top:357.1px;" width="18" height="18" viewBox="0 0 18 18"><rect x="0.6" y="0.6" width="16.8" height="16.8" rx="1.6" fill="#fff" stroke="#5a5a5a" stroke-width="1.2"/><path d="M3.9 8.1L6.9 11.1L11.2 3.7" fill="none" stroke="#5a5a5a" stroke-width="1.6"/></svg>
<div class="t" style="left:1671.70px;top:359.47px;font-size:15.99px;line-height:15.99px;color:#606060;transform:scaleX(0.9721);">Fasteners</div>
<svg class="r" style="left:1648px;top:380.1px;" width="18" height="18" viewBox="0 0 18 18"><rect x="0.6" y="0.6" width="16.8" height="16.8" rx="1.6" fill="#fff" stroke="#5a5a5a" stroke-width="1.2"/><path d="M3.9 8.1L6.9 11.1L11.2 3.7" fill="none" stroke="#5a5a5a" stroke-width="1.6"/></svg>
<div class="t" style="left:1671.70px;top:382.47px;font-size:15.99px;line-height:15.99px;color:#606060;transform:scaleX(0.9886);">Furnishings</div>
<svg class="r" style="left:1648px;top:403.1px;" width="18" height="18" viewBox="0 0 18 18"><rect x="0.6" y="0.6" width="16.8" height="16.8" rx="1.6" fill="#fff" stroke="#5a5a5a" stroke-width="1.2"/><path d="M3.9 8.1L6.9 11.1L11.2 3.7" fill="none" stroke="#5a5a5a" stroke-width="1.6"/></svg>
<div class="t" style="left:1671.70px;top:405.47px;font-size:15.99px;line-height:15.99px;color:#606060;transform:scaleX(0.9296);">Labels</div>
<svg class="r" style="left:1648px;top:426.1px;" width="18" height="18" viewBox="0 0 18 18"><rect x="0.6" y="0.6" width="16.8" height="16.8" rx="1.6" fill="#fff" stroke="#5a5a5a" stroke-width="1.2"/><path d="M3.9 8.1L6.9 11.1L11.2 3.7" fill="none" stroke="#5a5a5a" stroke-width="1.6"/></svg>
<div class="t" style="left:1671.70px;top:428.47px;font-size:15.99px;line-height:15.99px;color:#606060;transform:scaleX(0.9645);">Machines</div>
<svg class="r" style="left:1648px;top:449.1px;" width="18" height="18" viewBox="0 0 18 18"><rect x="0.6" y="0.6" width="16.8" height="16.8" rx="1.6" fill="#fff" stroke="#5a5a5a" stroke-width="1.2"/><path d="M3.9 8.1L6.9 11.1L11.2 3.7" fill="none" stroke="#5a5a5a" stroke-width="1.6"/></svg>
<div class="t" style="left:1671.70px;top:451.47px;font-size:15.99px;line-height:15.99px;color:#606060;transform:scaleX(0.9447);">Paper</div>
<svg class="r" style="left:1648px;top:472.1px;" width="18" height="18" viewBox="0 0 18 18"><rect x="0.6" y="0.6" width="16.8" height="16.8" rx="1.6" fill="#fff" stroke="#5a5a5a" stroke-width="1.2"/><path d="M3.9 8.1L6.9 11.1L11.2 3.7" fill="none" stroke="#5a5a5a" stroke-width="1.6"/></svg>
<div class="t" style="left:1671.70px;top:474.47px;font-size:15.99px;line-height:15.99px;color:#606060;transform:scaleX(0.9201);">Phones</div>
<svg class="r" style="left:1648px;top:495.1px;" width="18" height="18" viewBox="0 0 18 18"><rect x="0.6" y="0.6" width="16.8" height="16.8" rx="1.6" fill="#fff" stroke="#5a5a5a" stroke-width="1.2"/><path d="M3.9 8.1L6.9 11.1L11.2 3.7" fill="none" stroke="#5a5a5a" stroke-width="1.6"/></svg>
<div class="t" style="left:1671.70px;top:497.47px;font-size:15.99px;line-height:15.99px;color:#606060;transform:scaleX(0.9894);">Storage</div>
<svg class="r" style="left:1648px;top:518.1px;" width="18" height="18" viewBox="0 0 18 18"><rect x="0.6" y="0.6" width="16.8" height="16.8" rx="1.6" fill="#fff" stroke="#5a5a5a" stroke-width="1.2"/><path d="M3.9 8.1L6.9 11.1L11.2 3.7" fill="none" stroke="#5a5a5a" stroke-width="1.6"/></svg>
<div class="t" style="left:1671.70px;top:520.47px;font-size:15.99px;line-height:15.99px;color:#606060;transform:scaleX(0.9555);">Supplies</div>
<svg class="r" style="left:1648px;top:541.1px;" width="18" height="18" viewBox="0 0 18 18"><rect x="0.6" y="0.6" width="16.8" height="16.8" rx="1.6" fill="#fff" stroke="#5a5a5a" stroke-width="1.2"/><path d="M3.9 8.1L6.9 11.1L11.2 3.7" fill="none" stroke="#5a5a5a" stroke-width="1.6"/></svg>
<div class="t" style="left:1671.70px;top:543.47px;font-size:15.99px;line-height:15.99px;color:#606060;transform:scaleX(0.9692);">Tables</div>
<div class="r" style="left:271px;top:631px;width:1632px;height:407px;background:#fafafa;"></div>
<div class="r" style="left:279px;top:631px;width:1619px;height:300px;background:#ffffff;"></div>
<div class="t" style="left:296.70px;top:647.22px;font-size:20.06px;line-height:20.06px;color:#444;transform:scaleX(0.9527);">Dynamic Filtering</div>
<svg class="r" style="left:1701.5px;top:650px;" width="45" height="25" viewBox="0 0 45 25"><rect x="0" y="0" width="45" height="25" rx="12.5" fill="#e91e63"/><path d="M22.5 6.5V18.5M16.5 12.5H28.5" stroke="#fff" stroke-width="2.6"/></svg>
<svg class="r" style="left:1756.5px;top:650px;" width="45" height="25" viewBox="0 0 45 25"><rect x="0" y="0" width="45" height="25" rx="12.5" fill="#e91e63"/><path d="M17.5 8A6.5 6.5 0 1 1 16.3 14.5" fill="none" stroke="#fff" stroke-width="2"/><path d="M15 6.5V11.5H20" fill="none" stroke="#fff" stroke-width="1.8"/><path d="M23 9.5V13L25.5 15" fill="none" stroke="#fff" stroke-width="1.6"/></svg>
<svg class="r" style="left:1812px;top:650px;" width="45" height="25" viewBox="0 0 45 25"><rect x="0" y="0" width="45" height="25" rx="12.5" fill="#e91e63"/><path d="M17.5 5H25L29.5 9.5V20H17.5Z" fill="#fff"/><path d="M25 5V9.5H29.5" fill="none" stroke="#e91e63" stroke-width="0.8"/><path d="M13 12.5H27M24 9.5L27 12.5L24 15.5" fill="none" stroke="#fff" stroke-width="1.4"/><path d="M17.5 12.5H26.5M23.8 10L26.5 12.5L23.8 15" fill="none" stroke="#e91e63" stroke-width="1.3"/></svg>
<svg class="r" style="left:1868px;top:650px;" width="21" height="21" viewBox="0 0 21 21"><g transform="translate(10.5,10.5)"><path fill="#3c4043" d="M-1.7 -10H1.7L2.3 -7.2A7.5 7.5 0 0 1 4.6 -5.9L7.3 -6.9L9 -4L6.8 -2A7.5 7.5 0 0 1 6.8 2L9 4L7.3 6.9L4.6 5.9A7.5 7.5 0 0 1 2.3 7.2L1.7 10H-1.7L-2.3 7.2A7.5 7.5 0 0 1 -4.6 5.9L-7.3 6.9L-9 4L-6.8 2A7.5 7.5 0 0 1 -6.8 -2L-9 -4L-7.3 -6.9L-4.6 -5.9A7.5 7.5 0 0 1 -2.3 -7.2Z"/><circle r="3.2" fill="#fff"/></g></svg>
<div class="t" style="left:404.80px;top:693.12px;font-size:12.50px;line-height:12.50px;color:#45484c;font-weight:bold;transform:scaleX(0.8909);">Sub Category</div>
<svg class="r" style="left:477px;top:689px;" width="16" height="9" viewBox="0 0 16 9"><path d="M1 8.5L8 1L15 8.5Z" fill="#3c4043" stroke="#3c4043" stroke-width="1" stroke-linejoin="round"/></svg>
<div class="t" style="left:767.40px;top:693.12px;font-size:12.50px;line-height:12.50px;color:#45484c;font-weight:bold;transform:scaleX(0.8664);">Sales</div>
<div class="t" style="left:1036.80px;top:693.12px;font-size:12.50px;line-height:12.50px;color:#45484c;font-weight:bold;transform:scaleX(0.9039);">Comment</div>
<div class="t" style="left:1789.30px;top:693.12px;font-size:12.50px;line-height:12.50px;color:#45484c;font-weight:bold;transform:scaleX(0.9103);">Action</div>
<svg class="r" style="left:332px;top:736px;" width="13" height="13" viewBox="0 0 13 13"><rect x="0.75" y="0.75" width="11.5" height="11.5" rx="1.5" fill="none" stroke="#555" stroke-width="1.4"/></svg>
<div class="t" style="left:403.20px;top:737.39px;font-size:13.95px;line-height:13.95px;color:#555;transform:scaleX(0.9552);">Appliances</div>
<div class="t" style="left:766.00px;top:737.39px;font-size:13.95px;line-height:13.95px;color:#555;transform:scaleX(0.9595);">$42,927</div>
<div class="t" style="left:1036.80px;top:731.99px;font-size:13.95px;line-height:13.95px;color:#555;transform:scaleX(0.9444);">We can do better here.</div>
<svg class="r" style="left:1795px;top:737px;" width="14" height="14" viewBox="0 0 14 14"><path d="M1.3 12.2L1.6 9.6L8.2 3L10.5 5.3L3.9 11.9Z" fill="#e91e63"/><path d="M9.2 2L10.1 1.1A1.1 1.1 0 0 1 11.7 1.1L12.4 1.8A1.1 1.1 0 0 1 12.4 3.4L11.5 4.3Z" fill="#e91e63"/></svg>
<svg class="r" style="left:1826px;top:742px;" width="12" height="4" viewBox="0 0 12 4"><circle cx="2.3" cy="1.8" r="1.15" fill="#3a3a3a"/><circle cx="5.8" cy="1.8" r="1.15" fill="#3a3a3a"/><circle cx="9.3" cy="1.8" r="1.15" fill="#3a3a3a"/></svg>
<svg class="r" style="left:332px;top:784px;" width="13" height="13" viewBox="0 0 13 13"><rect x="0.75" y="0.75" width="11.5" height="11.5" rx="1.5" fill="none" stroke="#555" stroke-width="1.4"/></svg>
<div class="t" style="left:403.20px;top:785.39px;font-size:13.95px;line-height:13.95px;color:#555;transform:scaleX(0.9587);">Copiers</div>
<div class="t" style="left:766.00px;top:785.39px;font-size:13.95px;line-height:13.95px;color:#555;transform:scaleX(0.9595);">$62,899</div>
<div class="t" style="left:1036.80px;top:779.99px;font-size:13.95px;line-height:13.95px;color:#555;transform:scaleX(0.9550);">Copiers should be doing better</div>
<svg class="r" style="left:1795px;top:785px;" width="14" height="14" viewBox="0 0 14 14"><path d="M1.3 12.2L1.6 9.6L8.2 3L10.5 5.3L3.9 11.9Z" fill="#e91e63"/><path d="M9.2 2L10.1 1.1A1.1 1.1 0 0 1 11.7 1.1L12.4 1.8A1.1 1.1 0 0 1 12.4 3.4L11.5 4.3Z" fill="#e91e63"/></svg>
<svg class="r" style="left:1826px;top:790px;" width="12" height="4" viewBox="0 0 12 4"><circle cx="2.3" cy="1.8" r="1.15" fill="#3a3a3a"/><circle cx="5.8" cy="1.8" r="1.15" fill="#3a3a3a"/><circle cx="9.3" cy="1.8" r="1.15" fill="#3a3a3a"/></svg>
<svg class="r" style="left:332px;top:832px;" width="13" height="13" viewBox="0 0 13 13"><rect x="0.75" y="0.75" width="11.5" height="11.5" rx="1.5" fill="none" stroke="#555" stroke-width="1.4"/></svg>
<div class="t" style="left:403.20px;top:833.39px;font-size:13.95px;line-height:13.95px;color:#555;transform:scaleX(0.9543);">Fasteners</div>
<div class="t" style="left:766.00px;top:833.39px;font-size:13.95px;line-height:13.95px;color:#555;transform:scaleX(0.9566);">$858</div>
<div class="t" style="left:1036.80px;top:827.99px;font-size:13.95px;line-height:13.95px;color:#555;transform:scaleX(0.9522);">Do we need to stop selling Fasteners?</div>
<svg class="r" style="left:1795px;top:833px;" width="14" height="14" viewBox="0 0 14 14"><path d="M1.3 12.2L1.6 9.6L8.2 3L10.5 5.3L3.9 11.9Z" fill="#e91e63"/><path d="M9.2 2L10.1 1.1A1.1 1.1 0 0 1 11.7 1.1L12.4 1.8A1.1 1.1 0 0 1 12.4 3.4L11.5 4.3Z" fill="#e91e63"/></svg>
<svg class="r" style="left:1826px;top:838px;" width="12" height="4" viewBox="0 0 12 4"><circle cx="2.3" cy="1.8" r="1.15" fill="#3a3a3a"/><circle cx="5.8" cy="1.8" r="1.15" fill="#3a3a3a"/><circle cx="9.3" cy="1.8" r="1.15" fill="#3a3a3a"/></svg>
<svg class="r" style="left:332px;top:880px;" width="13" height="13" viewBox="0 0 13 13"><rect x="0.75" y="0.75" width="11.5" height="11.5" rx="1.5" fill="none" stroke="#555" stroke-width="1.4"/></svg>
<div class="t" style="left:403.20px;top:881.39px;font-size:13.95px;line-height:13.95px;color:#555;transform:scaleX(0.9529);">Phones</div>
<div class="t" style="left:766.00px;top:881.39px;font-size:13.95px;line-height:13.95px;color:#555;transform:scaleX(0.9450);">$105,341</div>
<div class="t" style="left:1036.80px;top:875.99px;font-size:13.95px;line-height:13.95px;color:#555;transform:scaleX(0.9529);">Phones are our best seller</div>
<svg class="r" style="left:1795px;top:881px;" width="14" height="14" viewBox="0 0 14 14"><path d="M1.3 12.2L1.6 9.6L8.2 3L10.5 5.3L3.9 11.9Z" fill="#e91e63"/><path d="M9.2 2L10.1 1.1A1.1 1.1 0 0 1 11.7 1.1L12.4 1.8A1.1 1.1 0 0 1 12.4 3.4L11.5 4.3Z" fill="#e91e63"/></svg>
<svg class="r" style="left:1826px;top:886px;" width="12" height="4" viewBox="0 0 12 4"><circle cx="2.3" cy="1.8" r="1.15" fill="#3a3a3a"/><circle cx="5.8" cy="1.8" r="1.15" fill="#3a3a3a"/><circle cx="9.3" cy="1.8" r="1.15" fill="#3a3a3a"/></svg>
<div class="r" style="left:0px;top:1052px;width:1915px;height:1px;background:#cfcfcf;"></div>
<div class="r" style="left:0px;top:1053px;width:1915px;height:36px;background:#e6e6e6;"></div>
<div class="r" style="left:1067px;top:1053px;width:122px;height:36px;background:#f8f8f8;"></div>
<div class="r" style="left:0px;top:1089px;width:1915px;height:1px;background:#d0d0d0;"></div>
<div class="r" style="left:0px;top:1090px;width:1915px;height:21px;background:#ebebeb;"></div>
<div class="r" style="left:159px;top:1053px;width:1px;height:36px;background:#cccccc;"></div>
<div class="r" style="left:352px;top:1053px;width:1px;height:36px;background:#cccccc;"></div>
<div class="r" style="left:495px;top:1053px;width:1px;height:36px;background:#cccccc;"></div>
<div class="r" style="left:613px;top:1053px;width:1px;height:36px;background:#cccccc;"></div>
<div class="r" style="left:712px;top:1053px;width:1px;height:36px;background:#cccccc;"></div>
<div class="r" style="left:842px;top:1053px;width:1px;height:36px;background:#cccccc;"></div>
<div class="r" style="left:989px;top:1053px;width:1px;height:36px;background:#cccccc;"></div>
<div class="r" style="left:1066px;top:1053px;width:1px;height:36px;background:#cccccc;"></div>
<div class="r" style="left:1189px;top:1053px;width:1px;height:36px;background:#cccccc;"></div>
<div class="r" style="left:1221px;top:1053px;width:1px;height:36px;background:#cccccc;"></div>
<div class="r" style="left:1253px;top:1053px;width:1px;height:36px;background:#cccccc;"></div>
<div class="r" style="left:1285px;top:1053px;width:1px;height:36px;background:#cccccc;"></div>
<div class="t" style="left:21.90px;top:1063.67px;font-size:15.99px;line-height:15.99px;color:#555;transform:scaleX(0.9462);">Data Source</div>
<div class="t" style="left:185.30px;top:1063.67px;font-size:15.99px;line-height:15.99px;color:#555;transform:scaleX(0.9511);">Enjoy Incredible Value</div>
<svg class="r" style="left:169px;top:1065px;" width="11" height="11" viewBox="0 0 11 11"><g fill="none" stroke="#555" stroke-width="1.1"><rect x="0.5" y="0.5" width="10" height="10"/><path d="M5.5 0.5V10.5M0.5 5.5H10.5"/></g></svg>
<div class="t" style="left:377.20px;top:1063.67px;font-size:15.99px;line-height:15.99px;color:#555;transform:scaleX(0.9803);">Getting started</div>
<svg class="r" style="left:361px;top:1065px;" width="11" height="11" viewBox="0 0 11 11"><g fill="none" stroke="#555" stroke-width="1.1"><rect x="0.5" y="0.5" width="10" height="10"/><path d="M5.5 0.5V10.5M0.5 5.5H10.5"/></g></svg>
<div class="t" style="left:520.00px;top:1063.67px;font-size:15.99px;line-height:15.99px;color:#555;transform:scaleX(0.9436);">Data Helper</div>
<svg class="r" style="left:504.4px;top:1065px;" width="11" height="11" viewBox="0 0 11 11"><g fill="none" stroke="#555" stroke-width="1.1"><rect x="0.5" y="0.5" width="10" height="10"/><path d="M5.5 0.5V10.5M0.5 5.5H10.5"/></g></svg>
<div class="t" style="left:638.50px;top:1063.67px;font-size:15.99px;line-height:15.99px;color:#555;transform:scaleX(0.9374);">Add Data</div>
<svg class="r" style="left:622px;top:1065px;" width="11" height="11" viewBox="0 0 11 11"><g fill="none" stroke="#555" stroke-width="1.1"><rect x="0.5" y="0.5" width="10" height="10"/><path d="M5.5 0.5V10.5M0.5 5.5H10.5"/></g></svg>
<div class="t" style="left:737.50px;top:1063.67px;font-size:15.99px;line-height:15.99px;color:#555;transform:scaleX(0.9680);">Collaboration</div>
<svg class="r" style="left:720.8px;top:1065px;" width="11" height="11" viewBox="0 0 11 11"><g fill="none" stroke="#555" stroke-width="1.1"><rect x="0.5" y="0.5" width="10" height="10"/><path d="M5.5 0.5V10.5M0.5 5.5H10.5"/></g></svg>
<div class="t" style="left:867.20px;top:1063.67px;font-size:15.99px;line-height:15.99px;color:#555;transform:scaleX(0.9699);">Data Correction</div>
<svg class="r" style="left:851px;top:1065px;" width="11" height="11" viewBox="0 0 11 11"><g fill="none" stroke="#555" stroke-width="1.1"><rect x="0.5" y="0.5" width="10" height="10"/><path d="M5.5 0.5V10.5M0.5 5.5H10.5"/></g></svg>
<div class="t" style="left:996.50px;top:1063.67px;font-size:15.99px;line-height:15.99px;color:#555;transform:scaleX(0.9031);">Sheet 12</div>
<svg class="r" style="left:8px;top:1065px;" width="8" height="12" viewBox="0 0 8 12"><path d="M0.6 2.2V9.8Q0.6 11.3 4 11.3Q7.4 11.3 7.4 9.8V2.2Q7.4 0.6 4 0.6Q0.6 0.6 0.6 2.2Q0.6 3.6 4 3.6Q7.4 3.6 7.4 2.2" fill="none" stroke="#555" stroke-width="1"/></svg>
<svg class="r" style="left:1075px;top:1065px;" width="11" height="11" viewBox="0 0 11 11"><g fill="none" stroke="#555" stroke-width="1.1"><rect x="0.5" y="0.5" width="10" height="10"/><path d="M5.5 0.5V10.5M0.5 5.5H10.5"/></g></svg>
<div class="t" style="left:1091.60px;top:1063.16px;font-size:15.41px;line-height:15.41px;color:#444;font-weight:bold;transform:scaleX(0.9526);">Dashboard 7</div>
<svg class="r" style="left:1199px;top:1064px;" width="16" height="16" viewBox="0 0 16 16"><path d="M6.5 10.5H0.5V0.5H10.5V6" fill="none" stroke="#555" stroke-width="1.1"/><path d="M3.3 9V7.5M5 9V5M6.6 9V6" stroke="#555" stroke-width="0.9"/><path d="M10.9 7.2V15M7 11.1H14.8" stroke="#555" stroke-width="1.9"/></svg>
<svg class="r" style="left:1231px;top:1064px;" width="16" height="16" viewBox="0 0 16 16"><path d="M6.5 10.5H2A1.5 1.5 0 0 1 0.5 9V2A1.5 1.5 0 0 1 2 0.5H9A1.5 1.5 0 0 1 10.5 2V6M5.3 0.5V10.5M0.5 5.3H10.5" fill="none" stroke="#555" stroke-width="1.1"/><path d="M10.9 7.2V15M7 11.1H14.8" stroke="#555" stroke-width="1.9"/></svg>
<svg class="r" style="left:1263px;top:1064px;" width="16" height="16" viewBox="0 0 16 16"><path d="M5 11.5L0.5 9.8V0.5L5 2.5L10 0.5V6.5M5 2.5V11.5" fill="none" stroke="#555" stroke-width="1.1"/><path d="M10.9 7.2V15M7 11.1H14.8" stroke="#555" stroke-width="1.9"/></svg>
<div class="r" style="left:1498px;top:1090px;width:1px;height:21px;background:#cfcfcf;"></div>
<div class="r" style="left:1655px;top:1090px;width:1px;height:21px;background:#cfcfcf;"></div>
<div class="r" style="left:1687px;top:1090px;width:1px;height:21px;background:#cfcfcf;"></div>
<div class="r" style="left:1719px;top:1090px;width:1px;height:21px;background:#cfcfcf;"></div>
<div class="r" style="left:1777px;top:1090px;width:1px;height:21px;background:#cfcfcf;"></div>
<div class="r" style="left:1847px;top:1090px;width:1px;height:21px;background:#cfcfcf;"></div>
<svg class="r" style="left:1505px;top:1094px;" width="11" height="13" viewBox="0 0 11 13"><circle cx="5.5" cy="3.8" r="3" fill="none" stroke="#555" stroke-width="1.1"/><path d="M0.8 12.5V11A4.7 4.5 0 0 1 10.2 11V12.5Z" fill="none" stroke="#555" stroke-width="1.1"/></svg>
<div class="t" style="left:1524.20px;top:1093.76px;font-size:15.41px;line-height:15.41px;color:#333;transform:scaleX(0.8670);">Vincent Cruick...</div>
<svg class="r" style="left:1637px;top:1099px;" width="9" height="5" viewBox="0 0 9 5"><path d="M0 0H9L4.5 4.5Z" fill="#111"/></svg>
<svg class="r" style="left:1785px;top:1097px;" width="7" height="9" viewBox="0 0 7 9"><rect x="0" y="0.5" width="1" height="8" fill="#bbb"/><path d="M1.5 4.5L6 0.5V8.5Z" fill="#bbb"/></svg>
<svg class="r" style="left:1801px;top:1097px;" width="6" height="9" viewBox="0 0 6 9"><path d="M0.5 4.5L5 0.5V8.5Z" fill="#bbb"/></svg>
<svg class="r" style="left:1817px;top:1097px;" width="6" height="9" viewBox="0 0 6 9"><path d="M5.5 4.5L1 0.5V8.5Z" fill="#bbb"/></svg>
<svg class="r" style="left:1833px;top:1097px;" width="7" height="9" viewBox="0 0 7 9"><rect x="6" y="0.5" width="1" height="8" fill="#bbb"/><path d="M5.5 4.5L1 0.5V8.5Z" fill="#bbb"/></svg>
<svg class="r" style="left:1856px;top:1096px;" width="11" height="11" viewBox="0 0 11 11"><g fill="#aaa"><rect x="0" y="0" width="3" height="3"/><rect x="0" y="4" width="3" height="3"/><rect x="0" y="8" width="3" height="3"/><rect x="4" y="0" width="3" height="3"/><rect x="4" y="4" width="3" height="3"/><rect x="4" y="8" width="3" height="3"/><rect x="8" y="0" width="3" height="3"/><rect x="8" y="4" width="3" height="3"/><rect x="8" y="8" width="3" height="3"/></g></svg>
<svg class="r" style="left:1878px;top:1096px;" width="11" height="11" viewBox="0 0 11 11"><rect x="0" y="0" width="11" height="7" fill="#aaa"/><rect x="0" y="8" width="3" height="3" fill="#aaa"/><rect x="4" y="8" width="3" height="3" fill="#aaa"/><rect x="8" y="8" width="3" height="3" fill="#aaa"/></svg>
<svg class="r" style="left:1900px;top:1096px;" width="11" height="11" viewBox="0 0 11 11"><rect x="0" y="0" width="11" height="11" fill="#555"/></svg>
<svg class="r" style="left:1554px;top:128px;" width="15" height="21" viewBox="0 0 15 21"><path d="M1.5 1.5V17.3L5.3 13.8L8.6 19.3L10.6 18.6L8.6 13.1H12.9Z" fill="#fff" stroke="#111" stroke-width="1.05" stroke-linejoin="round"/></svg>
</body></html>
